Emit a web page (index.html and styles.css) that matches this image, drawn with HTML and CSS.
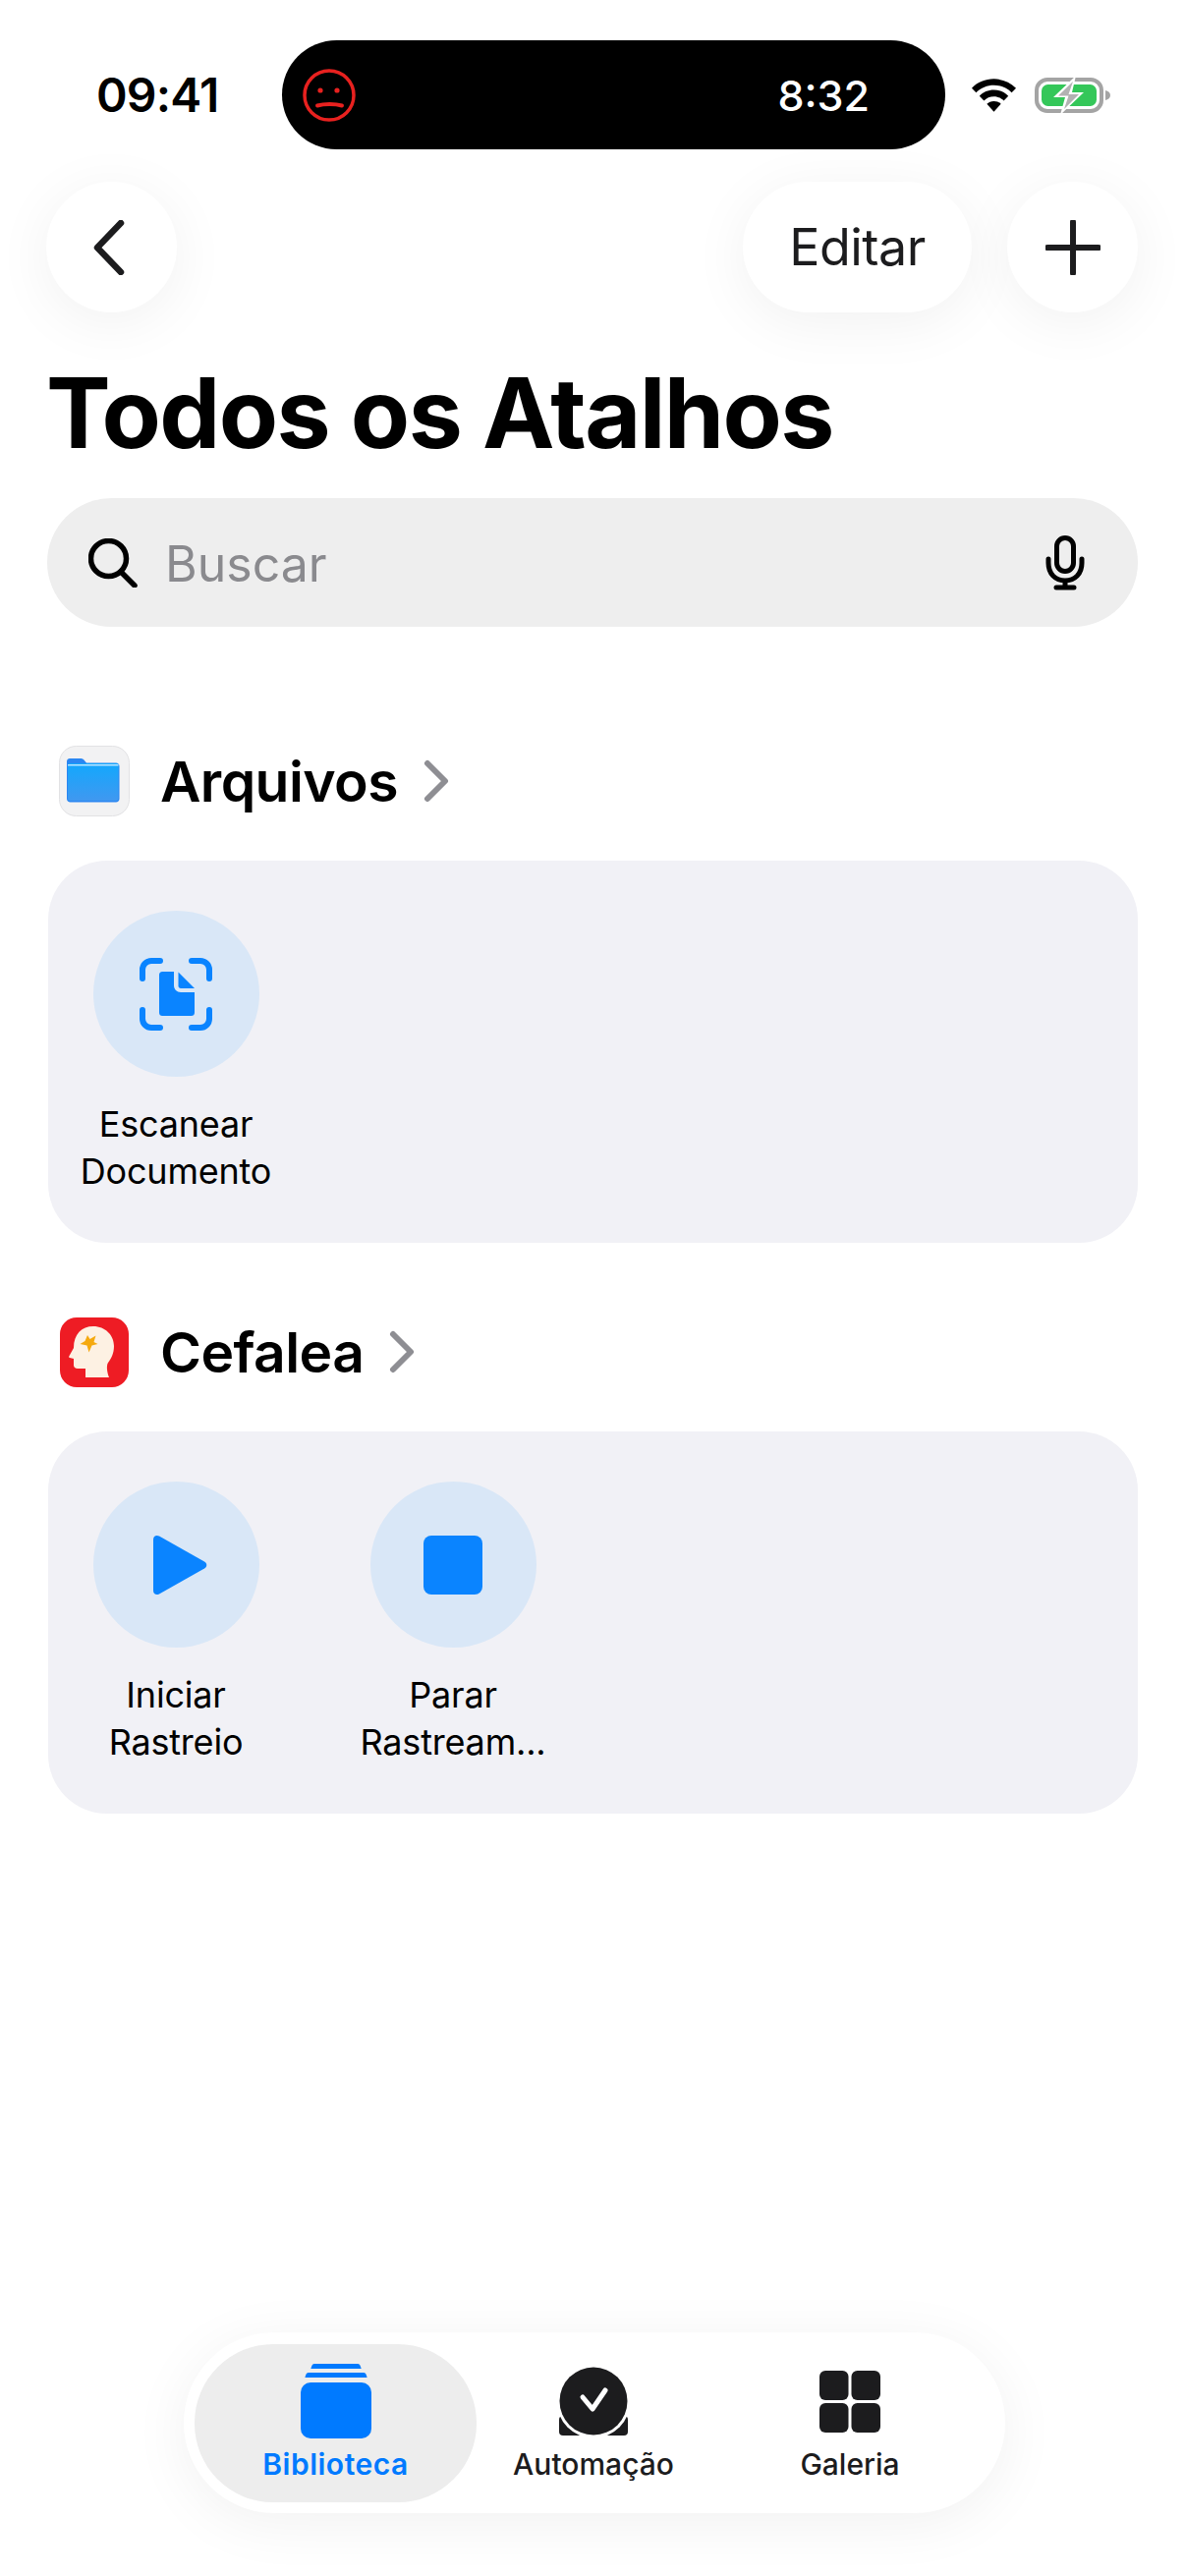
FILE: index.html
```html
<!DOCTYPE html>
<html lang="pt">

<head>
    <meta charset="UTF-8">
    <meta name="viewport" content="width=device-width, initial-scale=1.0">
    <title>Todos os Atalhos</title>
    <link rel="stylesheet" href="styles.css">
</head>

<body>

    <div class="status-bar">
        <span class="clock">09:41</span>
        <div class="island">
            <svg class="island-face" viewBox="0 0 56 56" fill="none" stroke="#e8211f">
                <circle cx="28" cy="28" r="25" stroke-width="3.500"/>
                <circle cx="19" cy="23" r="2.600" fill="#e8211f" stroke="none"/>
                <circle cx="36" cy="23" r="2.600" fill="#e8211f" stroke="none"/>
                <path d="M16 38.500c7-2 18-2 25 0" stroke-width="4" stroke-linecap="round"/>
            </svg>
            <span class="island-time">8:32</span>
        </div>
        <div class="status-icons">
            <svg class="wifi" viewBox="0 0 48 34">
                <path d="M24 0C15 0 7 3.500 1 9.500l4.500 4.700C10.500 9.200 17 6.500 24 6.500s13.500 2.700 18.500 7.700L47 9.500C41 3.500 33 0 24 0z" fill="#000"/>
                <path d="M24 11.500c-6 0-11.200 2.300-15 6.200l4.700 4.800c2.700-2.700 6.300-4.300 10.300-4.300s7.600 1.600 10.300 4.300l4.700-4.800c-3.800-3.900-9-6.200-15-6.200z" fill="#000"/>
                <path d="M24 23c-3 0-5.500 1.100-7.300 3L24 34l7.300-8c-1.800-1.900-4.300-3-7.300-3z" fill="#000"/>
            </svg>
            <svg class="battery" viewBox="0 0 78 40">
                <rect x="2" y="4" width="66" height="32" rx="11" fill="none" stroke="#a4a4a4" stroke-width="4"/>
                <rect x="7" y="9" width="56" height="22" rx="6.500" fill="#34c759"/>
                <path d="M72 15c3 .8 5 2.500 5 5s-2 4.200-5 5z" fill="#a4a4a4"/>
                <path d="M42 0 19 22h12l-5 18 24-23H38z" fill="#fff"/>
                <path d="M39 6 24 20.500h10.500L30 34l15-15H34.500z" fill="#b2b2b2"/>
            </svg>
        </div>
    </div>

    <div class="nav-bar">
        <button class="round-btn">
            <svg class="nav-icon" viewBox="0 0 56 56" fill="none" stroke="#1c1c1e" stroke-width="6.500" stroke-linecap="round" stroke-linejoin="round">
                <path d="M37 3 13 28l24 25"/>
            </svg>
        </button>
        <div class="nav-right">
            <button class="pill-btn">Editar</button>
            <button class="round-btn">
                <svg class="nav-icon" viewBox="0 0 56 56" fill="none" stroke="#1c1c1e" stroke-width="6" stroke-linecap="round">
                    <path d="M28 2v52M2 28h52"/>
                </svg>
            </button>
        </div>
    </div>

    <h1 class="page-title">Todos os Atalhos</h1>

    <div class="search">
        <svg class="search-icon" viewBox="0 0 50 50" fill="none" stroke="#000" stroke-width="5.500" stroke-linecap="round">
            <circle cx="20.500" cy="20.500" r="18"/>
            <path d="m33 34 14 14"/>
        </svg>
        <span class="search-text">Buscar</span>
        <svg class="mic-icon" viewBox="0 0 40 56" fill="none" stroke="#000" stroke-width="5" stroke-linecap="round">
            <rect x="11.500" y="2.500" width="17" height="34" rx="8.500"/>
            <path d="M3 24v4c0 11 7 18 17 18s17-7 17-18v-4M20 46v7M11 53h18"/>
        </svg>
    </div>

    <section class="group group-first">
        <div class="group-head">
            <svg class="app-icon" viewBox="0 0 72 74">
                <defs>
                    <linearGradient id="folderFill" x1="0" y1="0" x2="0" y2="1">
                        <stop offset="0" stop-color="#12a8fd"/>
                        <stop offset="1" stop-color="#4098f0"/>
                    </linearGradient>
                </defs>
                <rect x=".5" y="1.500" width="71" height="71" rx="17" fill="#f2f2f3" stroke="#e2e2e4"/>
                <path d="M8 17c0-2 1.500-3 3-3h11c1.500 0 2.500.5 3.500 1.500l2.500 3h30c2 0 3.500 1.500 3.500 3.500v33c0 2-1.500 3.500-3.500 3.500H11.500c-2 0-3.500-1.500-3.500-3.500z" fill="#2a86f2"/>
                <rect x="9" y="19" width="51.500" height="38" rx="2" fill="url(#folderFill)"/>
                <rect x="9" y="20" width="51.500" height="1.500" fill="#b9e4ff"/>
            </svg>
            <h2 class="group-name">Arquivos</h2>
            <svg class="chevron" viewBox="0 0 26 44" fill="none" stroke="#8e8e93" stroke-width="6" stroke-linecap="round" stroke-linejoin="round">
                <path d="m4 4 18 18L4 40"/>
            </svg>
        </div>
        <div class="card">
            <div class="shortcut">
                <div class="shortcut-circle">
                    <svg class="glyph-scan" viewBox="0 0 74 74" fill="none" stroke="#0a84ff" stroke-width="6" stroke-linecap="round">
                        <path d="M3 21v-9c0-5 4-9 9-9h9M53 3h9c5 0 9 4 9 9v9M71 53v9c0 5-4 9-9 9h-9M21 71h-9c-5 0-9-4-9-9v-9"/>
                        <path d="M35 14v14c0 4 3 7 7 7h14v20c0 3-1 4-4 4H24c-3 0-4-1-4-4V18c0-3 1-4 4-4z" fill="#0a84ff" stroke="none"/>
                        <path d="M39.500 14.500 56 31H42c-1.500 0-2.500-1-2.500-2.500z" fill="#0a84ff" stroke="none"/>
                    </svg>
                </div>
                <span class="shortcut-name">Escanear Documento</span>
            </div>
        </div>
    </section>

    <section class="group">
        <div class="group-head">
            <svg class="app-icon" viewBox="0 0 72 74">
                <rect x="1" y="2" width="70" height="71" rx="17" fill="#ee1c24"/>
                <path d="M27 63V54h-8c-2.500 0-4-1.500-4-3.500V44l-4-1c-1-.3-1-1-.6-1.800L15 33c0-14 8-22 20-22s21 9 21 20c0 8-3 13-6 17-2 3-1 10 1 15z" fill="#fdf1e3"/>
                <path d="m29 20 2.500 4 6-3.500-2 6.500 4 2-6 1.500-3 7-2-7-7-1.500 5-3z" fill="#f5a90f"/>
            </svg>
            <h2 class="group-name">Cefalea</h2>
            <svg class="chevron" viewBox="0 0 26 44" fill="none" stroke="#8e8e93" stroke-width="6" stroke-linecap="round" stroke-linejoin="round">
                <path d="m4 4 18 18L4 40"/>
            </svg>
        </div>
        <div class="card">
            <div class="shortcut">
                <div class="shortcut-circle">
                    <svg class="glyph-play" viewBox="0 0 56 62" fill="#0a84ff">
                        <path d="M1 5c0-3.500 3-5 6-3.500l46 26c3 1.800 3 5.200 0 7l-46 26C4 62 1 60.500 1 57z"/>
                    </svg>
                </div>
                <span class="shortcut-name">Iniciar Rastreio</span>
            </div>
            <div class="shortcut">
                <div class="shortcut-circle">
                    <div class="glyph-stop"></div>
                </div>
                <span class="shortcut-name">Parar Rastream...</span>
            </div>
        </div>
    </section>

    <nav class="tab-bar">
        <div class="tab tab-active">
            <svg class="tab-icon" viewBox="0 0 72 76" fill="#007aff">
                <path d="M14 0h44c1.500 0 2.500 1 3 3l.7 2H10.300l.7-2c.5-2 1.500-3 3-3z"/>
                <path d="M8 9h56c1.500 0 2.500 1 3 3l.6 2H4.400L5 12c.5-2 1.500-3 3-3z"/>
                <rect y="19" width="72" height="57" rx="10"/>
            </svg>
            <span>Biblioteca</span>
        </div>
        <div class="tab">
            <svg class="tab-icon" viewBox="-1 -3 72 76">
                <rect y="50" width="70" height="20" rx="4" fill="#1c1c1e"/>
                <circle cx="35" cy="35" r="37.500" fill="#fff"/>
                <circle cx="35" cy="35" r="34.500" fill="#1c1c1e"/>
                <path d="m24 31 10 12 13-19" fill="none" stroke="#fff" stroke-width="5" stroke-linecap="round" stroke-linejoin="round"/>
            </svg>
            <span>Automação</span>
        </div>
        <div class="tab">
            <svg class="tab-icon" viewBox="0 0 72 76" fill="#1c1c1e">
                <rect x="5" y="7" width="29.500" height="30" rx="6"/>
                <rect x="37.500" y="7" width="29.500" height="30" rx="6"/>
                <rect x="5" y="40" width="29.500" height="30" rx="6"/>
                <rect x="37.500" y="40" width="29.500" height="30" rx="6"/>
            </svg>
            <span>Galeria</span>
        </div>
    </nav>

</body>

</html>
```

FILE: styles.css
```css
* {
    box-sizing: border-box;
}

body {
    font-family: Inter, "Noto Sans", sans-serif;
    background-color: #ffffff;
    color: #000000;
    margin: 0;
    width: 1206px;
    height: 2622px;
    overflow: hidden;
    display: flex;
    flex-direction: column;
}

.status-bar {
    display: flex;
    align-items: center;
    height: 111px;
    margin-top: 41px;
    padding-left: 98px;
}

.clock {
    width: 189px;
    font-size: 48px;
    font-weight: 600;
    letter-spacing: -0.8px;
}

.island {
    width: 675px;
    height: 111px;
    background-color: #000000;
    border-radius: 56px;
    display: flex;
    align-items: center;
    justify-content: space-between;
    padding: 0 77px 0 20px;
}

.island-face {
    width: 56px;
    height: 56px;
}

.island-time {
    color: #ffffff;
    font-size: 43px;
    font-weight: 500;
}

.status-icons {
    display: flex;
    align-items: center;
    gap: 18px;
    margin-left: 26px;
}

.wifi {
    width: 47px;
    height: 34px;
}

.battery {
    width: 78px;
    height: 40px;
}

.nav-bar {
    display: flex;
    justify-content: space-between;
    padding: 0 48px 0 47px;
    margin-top: 33px;
}

.nav-right {
    display: flex;
    gap: 36px;
}

.round-btn,
.pill-btn {
    height: 133px;
    border: none;
    background-color: #ffffff;
    border-radius: 67px;
    box-shadow: 0 10px 60px rgba(0, 0, 0, 0.06);
    display: flex;
    align-items: center;
    justify-content: center;
    padding: 0;
}

.round-btn {
    width: 133px;
}

.pill-btn {
    width: 233px;
    font-family: inherit;
    font-size: 52px;
    font-weight: 400;
    color: #1c1c1e;
    letter-spacing: -0.5px;
}

.nav-icon {
    width: 56px;
    height: 56px;
}

.page-title {
    margin: 46px 0 0 47px;
    font-size: 98.5px;
    line-height: 114px;
    font-weight: 700;
    letter-spacing: -1.6px;
}

.search {
    display: flex;
    align-items: center;
    height: 131px;
    margin: 29px 48px 0;
    padding: 0 54px 0 42px;
    background-color: #eeeeee;
    border-radius: 66px;
}

.search-icon {
    width: 50px;
    height: 50px;
}

.search-text {
    flex: 1;
    margin-left: 28px;
    font-size: 50px;
    padding-top: 2px;
    color: #8a8a8e;
}

.mic-icon {
    width: 40px;
    height: 56px;
}

.group {
    margin: 0 48px 0 49px;
    padding-top: 74px;
}

.group-first {
    padding-top: 120px;
}

.group-head {
    display: flex;
    align-items: center;
    height: 74px;
    padding-left: 11px;
}

.app-icon {
    width: 72px;
    height: 74px;
}

.group-name {
    margin: 0 0 0 31px;
    font-size: 57px;
    font-weight: 600;
    letter-spacing: -0.6px;
}

.chevron {
    width: 26px;
    height: 44px;
    margin-left: 26px;
}

.card {
    display: flex;
    gap: 98px;
    height: 389px;
    margin-top: 44px;
    padding: 51px 0 0 38px;
    background-color: #f1f1f6;
    border-radius: 60px;
}

.shortcut {
    width: 184px;
    display: flex;
    flex-direction: column;
    align-items: center;
}

.shortcut-circle {
    width: 169px;
    height: 169px;
    border-radius: 50%;
    background-color: #d9e7f7;
    display: flex;
    align-items: center;
    justify-content: center;
}

.shortcut-name {
    margin-top: 24px;
    font-size: 36px;
    line-height: 48px;
    letter-spacing: -0.2px;
    text-align: center;
    color: #000000;
}

.glyph-scan {
    width: 74px;
    height: 74px;
}

.glyph-play {
    width: 56px;
    height: 62px;
    margin-left: 8px;
}

.glyph-stop {
    width: 60px;
    height: 60px;
    background-color: #0a84ff;
    border-radius: 8px;
}

.tab-bar {
    display: flex;
    align-items: center;
    gap: 23px;
    width: 836px;
    height: 184px;
    margin: auto 0 64px 187px;
    padding: 0 11px;
    background-color: #ffffff;
    border-radius: 92px;
    box-shadow: 0 10px 60px rgba(0, 0, 0, 0.06);
}

.tab {
    width: 238px;
    height: 161px;
    display: flex;
    flex-direction: column;
    align-items: center;
    padding-top: 20px;
    font-size: 30px;
    font-weight: 500;
    color: #1c1c1e;
}

.tab-active {
    width: 287px;
    margin-right: -23px;
    background-color: #ededed;
    border-radius: 80px;
    color: #007aff;
    font-weight: 600;
    letter-spacing: 0.5px;
}

.tab-icon {
    width: 72px;
    height: 76px;
    margin-bottom: 8px;
}
```
